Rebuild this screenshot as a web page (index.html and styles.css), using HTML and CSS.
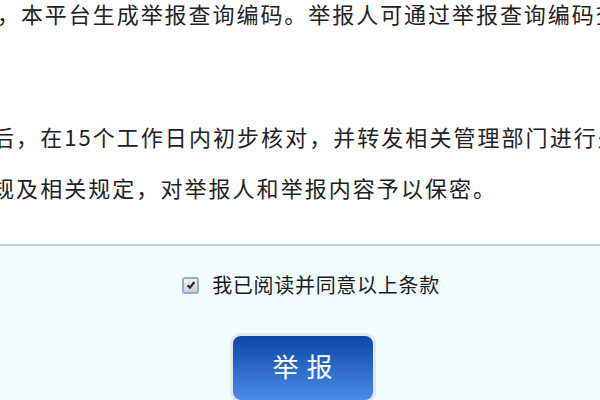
FILE: index.html
```html
<!DOCTYPE html>
<html lang="zh-CN">
<head>
<meta charset="utf-8">
<title>举报须知</title>
<link rel="stylesheet" href="styles.css">
</head>
<body>
<div class="page">
  <div class="notice">
    <div class="notice-body">
      <p class="line first">受，本平台生成举报查询编码。举报人可通过举报查询编码查询</p>
      <p class="line second">理后，在15个工作日内初步核对，并转发相关管理部门进行处理</p>
      <p class="line">法规及相关规定，对举报人和举报内容予以保密。</p>
    </div>
  </div>
  <div class="agree">
    <label class="agree-row">
      <span class="check">
        <svg viewBox="0 0 10 10" width="10" height="10"><path d="M1.6 5.2 L4 7.6 L8.4 2" fill="none" stroke="#2a2a2a" stroke-width="2.2"/></svg>
      </span>
      <span class="agree-text">我已阅读并同意以上条款</span>
    </label>
    <div class="actions">
      <button class="submit" type="button">举报</button>
    </div>
  </div>
</div>
</body>
</html>
```
FILE: styles.css
```css
html, body {
  margin: 0;
  padding: 0;
}
body {
  width: 600px;
  height: 400px;
  overflow: hidden;
  background: #ffffff;
  font-family: "Noto Sans CJK SC", "Noto Sans", sans-serif;
  color: #222222;
}
.page {
  display: flex;
  flex-direction: column;
  height: 400px;
}
.notice {
  height: 254px;
  overflow: hidden;
  background: #ffffff;
}
.notice-body {
  margin-left: -32px;
}
.line {
  margin: 0;
  white-space: nowrap;
  font-size: 22px;
  letter-spacing: 2.05px;
  line-height: 51px;
}
.line.first {
  margin-top: -12px;
  text-indent: 5px;
  letter-spacing: 1.95px;
}
.line.second {
  margin-top: 72px;
}
.agree {
  flex: 1;
  background: #f0fdfd;
  border-top: 2px solid #b3d3cf;
  display: flex;
  flex-direction: column;
  align-items: center;
}
.agree-row {
  display: flex;
  align-items: center;
  gap: 13px;
  margin-top: 26px;
  margin-left: 22px;
  font-size: 20px;
  letter-spacing: 0.7px;
  line-height: 26px;
  color: #1a1a1a;
}
.check {
  width: 17px;
  height: 17px;
  box-sizing: border-box;
  border: 2px solid #86aee0;
  border-radius: 3px;
  background: linear-gradient(#f4f4f4, #cdcdcd);
  display: flex;
  align-items: center;
  justify-content: center;
}
.actions {
  margin-top: 38px;
  margin-left: 5px;
}
.submit {
  width: 140px;
  height: 64px;
  border: none;
  border-radius: 8px;
  background: linear-gradient(#0a47a6, #4b8ce9);
  box-shadow: 0 0 0 3px #e3e8ec;
  color: #ffffff;
  font-family: "Noto Sans CJK SC", sans-serif;
  font-size: 26px;
  letter-spacing: 8px;
  text-indent: 8px;
  padding: 0 0 6px;
}
```
